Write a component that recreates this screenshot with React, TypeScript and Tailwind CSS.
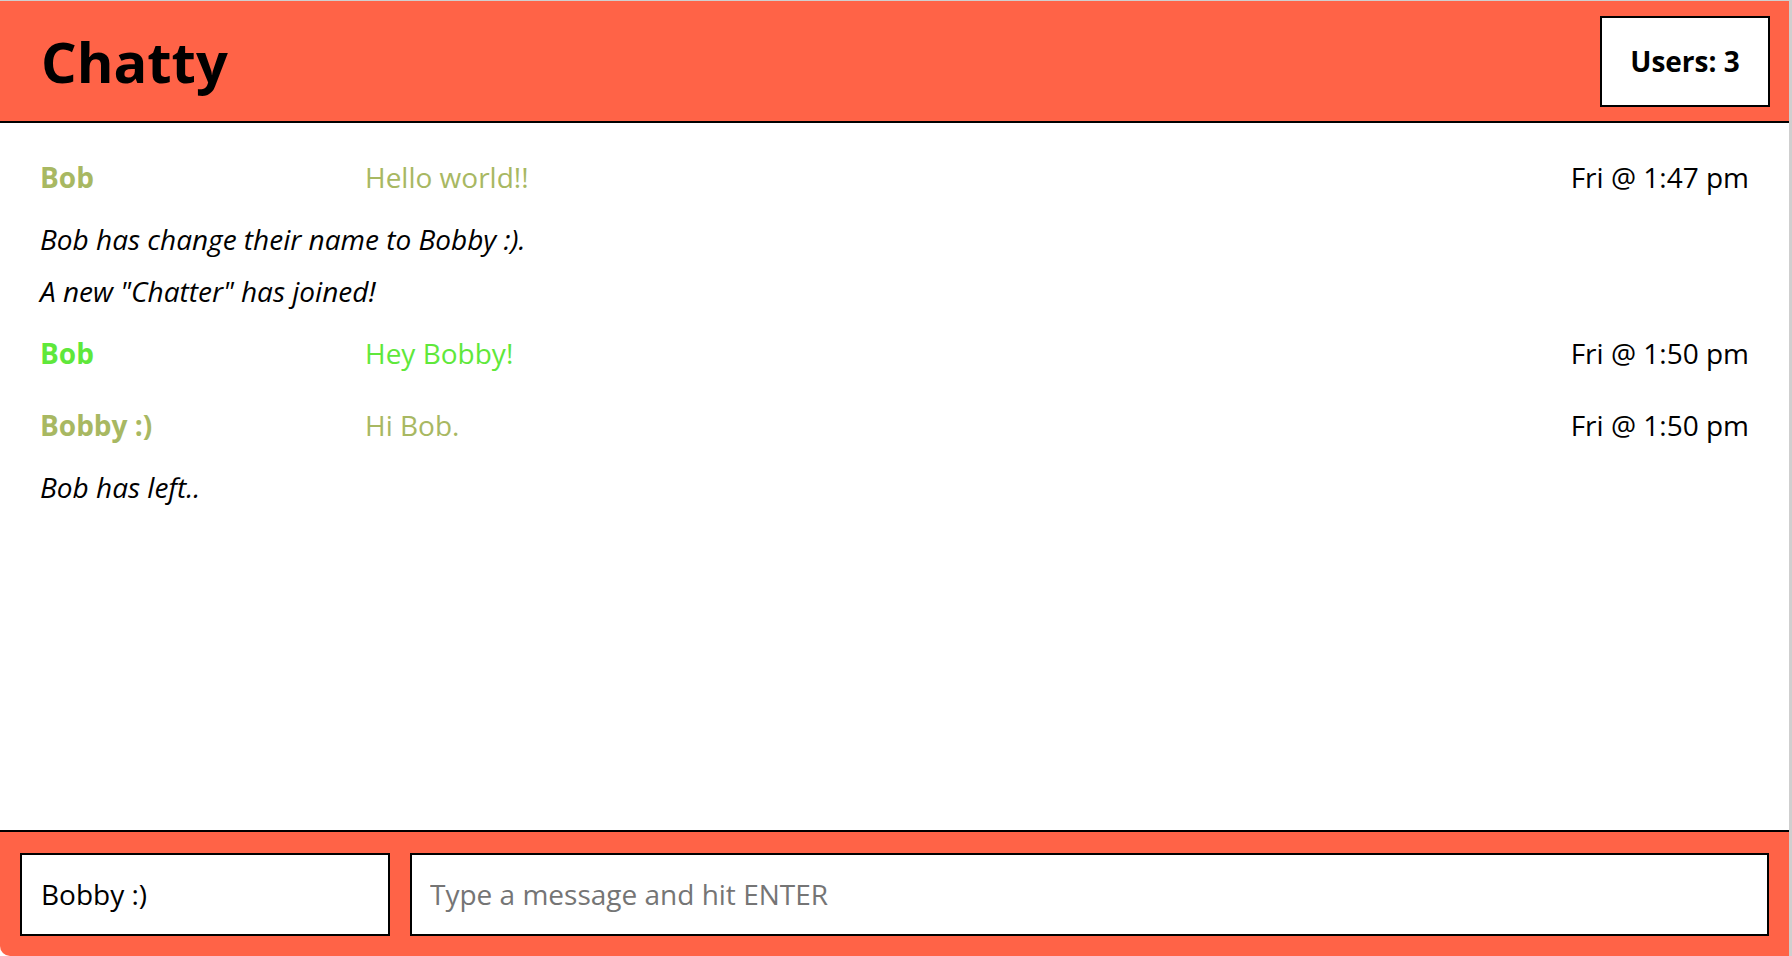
import React from "react";

const font = { fontFamily: '"Open Sans", "Noto Sans", sans-serif' };

type Item =
  | { kind: "msg"; user: string; text: string; time: string; color: string }
  | { kind: "note"; text: string };

const items: Item[] = [
  { kind: "msg", user: "Bob", text: "Hello world!!", time: "Fri @ 1:47 pm", color: "text-[#a8b862]" },
  { kind: "note", text: "Bob has change their name to Bobby :)." },
  { kind: "note", text: 'A new "Chatter" has joined!' },
  { kind: "msg", user: "Bob", text: "Hey Bobby!", time: "Fri @ 1:50 pm", color: "text-[#5fe83b]" },
  { kind: "msg", user: "Bobby :)", text: "Hi Bob.", time: "Fri @ 1:50 pm", color: "text-[#a8b862]" },
  { kind: "note", text: "Bob has left.." },
];

export default function App() {
  return (
    <div className="h-[956px] w-full flex bg-white border-t border-[#cfcfcf] overflow-hidden" style={font}>
      <div className="w-[1789px] h-full flex flex-col">
        <header className="h-[122px] shrink-0 bg-[#ff6347] border-b-2 border-black flex items-center justify-between pl-[41px] pr-[19px]">
          <h1 className="text-[56px] font-bold leading-none text-black">Chatty</h1>
          <div className="w-[170px] h-[91px] border-2 border-black bg-white flex items-center justify-center">
            <span className="text-[28px] font-bold text-black">Users: 3</span>
          </div>
        </header>
        <main className="flex-1 pt-[18px] px-[40px] text-[28px] text-black">
          {items.map((it, i) =>
            it.kind === "msg" ? (
              <div key={i} className="h-[72px] flex items-center">
                <span className={`w-[325px] shrink-0 font-bold ${it.color}`}>{it.user}</span>
                <span className={`flex-1 ${it.color}`}>{it.text}</span>
                <span className="text-black">{it.time}</span>
              </div>
            ) : (
              <div key={i} className="h-[52px] flex items-center italic text-black">
                {it.text}
              </div>
            )
          )}
        </main>
        <footer className="h-[126px] shrink-0 bg-[#ff6347] border-t-2 border-black rounded-bl-[10px] flex items-center gap-[20px] px-[20px]">
          <input
            className="w-[370px] h-[83px] border-2 border-black bg-white px-[19px] text-[28px] text-black outline-none"
            style={font}
            defaultValue="Bobby :)"
          />
          <input
            className="flex-1 h-[83px] border-2 border-black bg-white px-[18px] text-[28px] text-black placeholder:text-[#757575] outline-none"
            style={font}
            placeholder="Type a message and hit ENTER"
          />
        </footer>
      </div>
      <div className="w-[3px] h-full bg-[#cfcfcf]" />
    </div>
  );
}
